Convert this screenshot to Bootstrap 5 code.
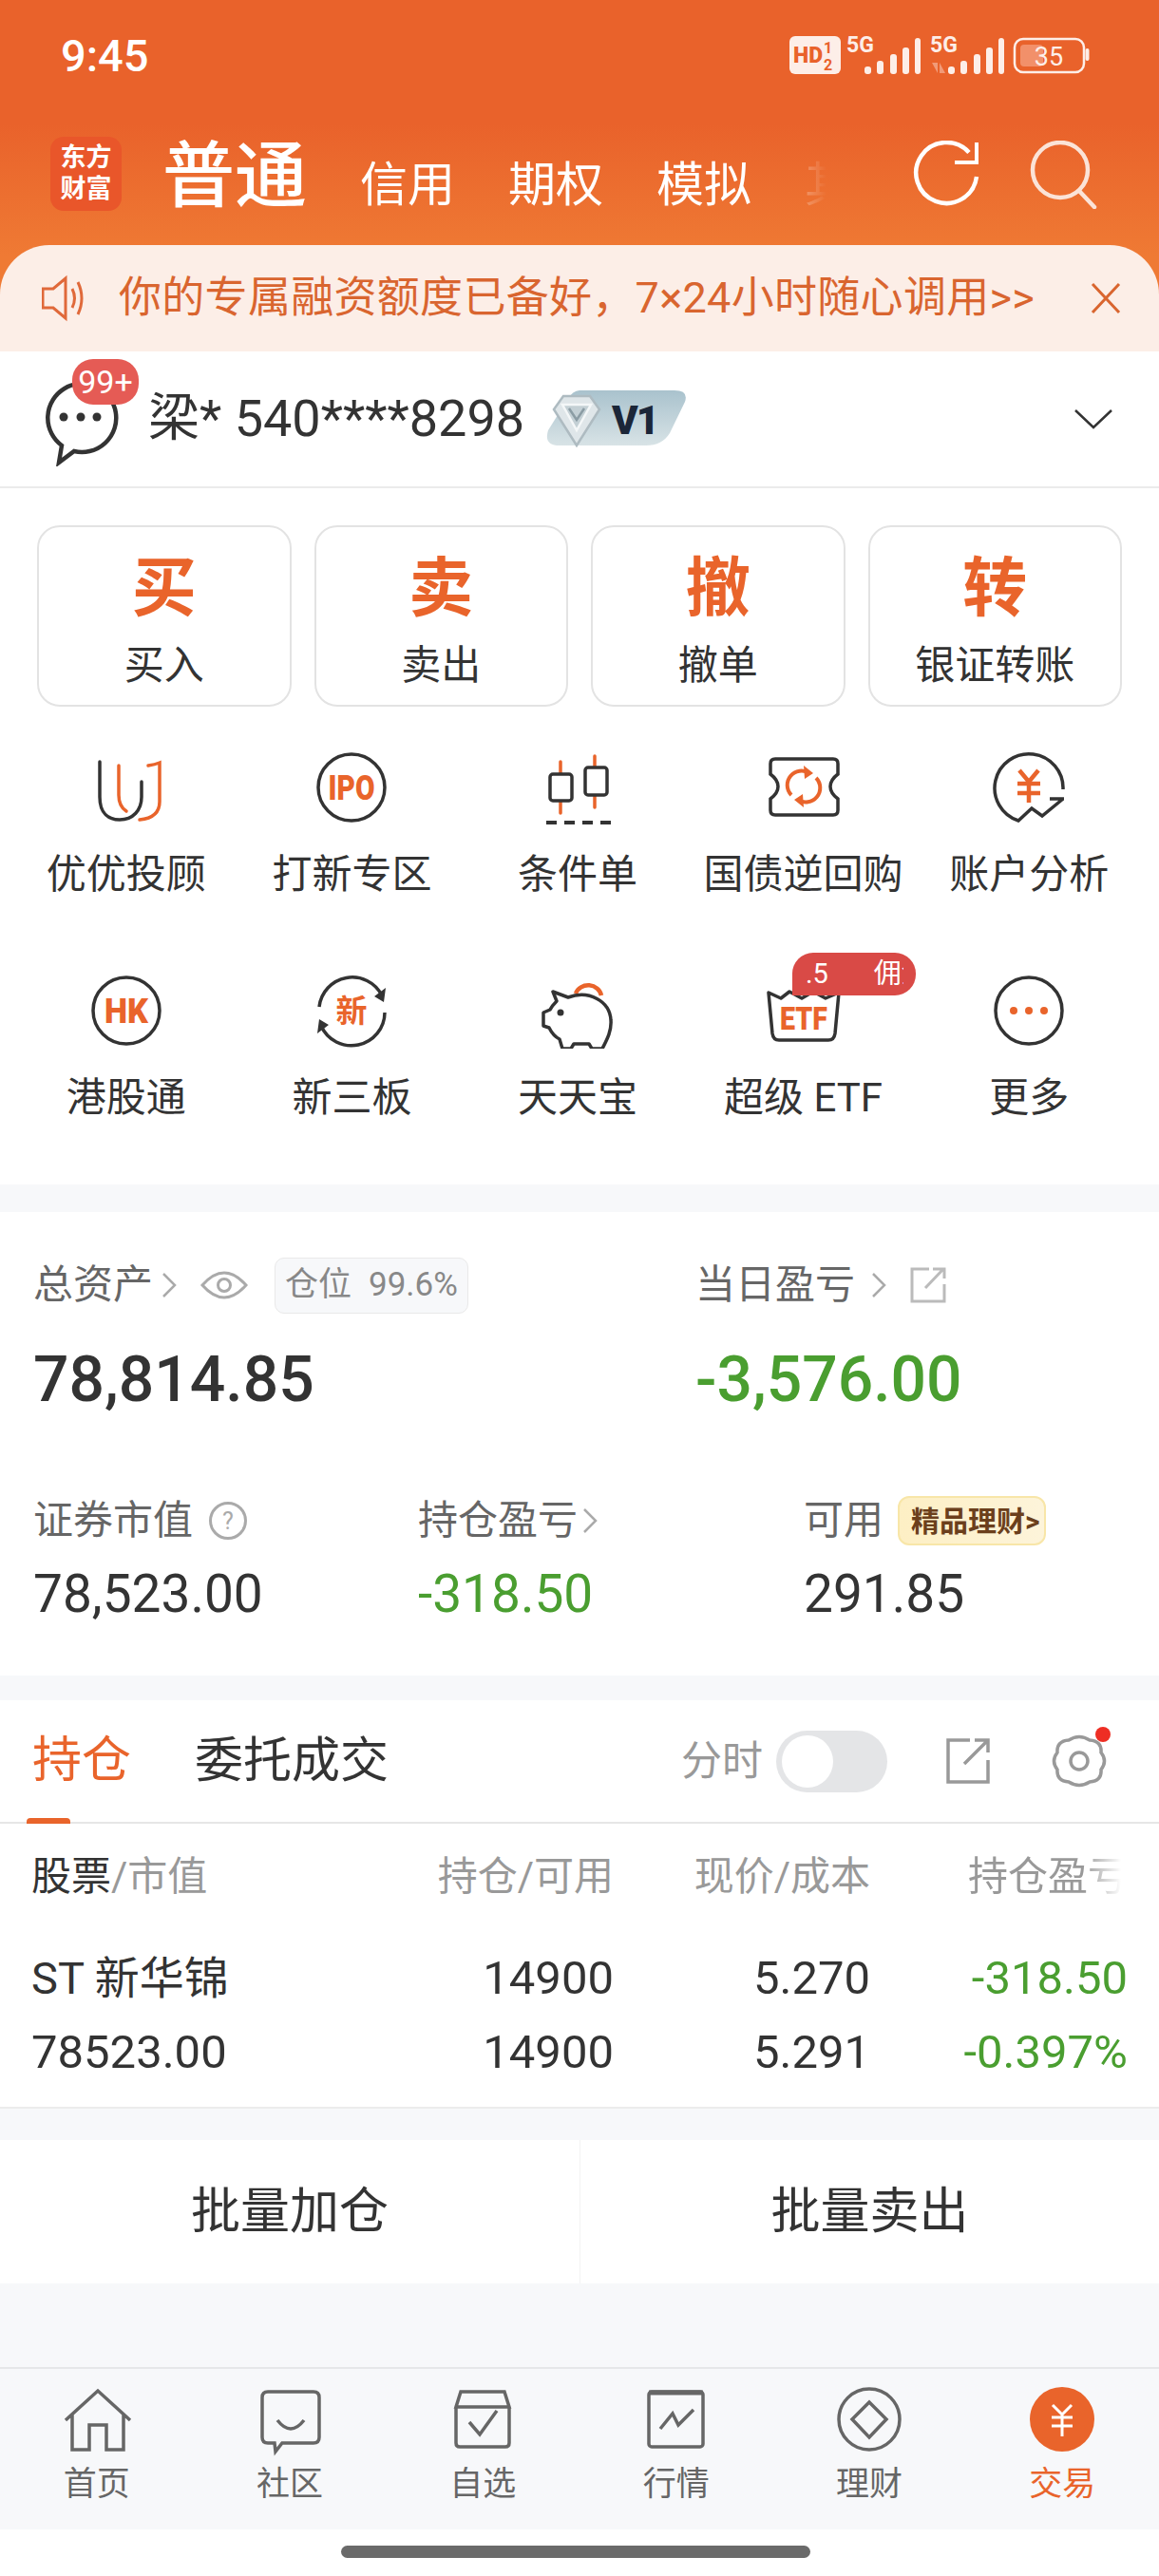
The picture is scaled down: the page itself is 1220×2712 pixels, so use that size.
<!DOCTYPE html>
<html lang="zh-CN">
<head>
  <meta charset="UTF-8">
  <meta name="viewport" content="width=device-width, initial-scale=1">
  <title>交易</title>
  <link href="https://cdn.jsdelivr.net/npm/bootstrap@5.3.3/dist/css/bootstrap.min.css" rel="stylesheet">
  <style>
    html, body {
      margin: 0;
      background: #f7f8fa;
      font-family: Roboto, "Noto Sans CJK SC", sans-serif;
      color: #333;
    }
    svg { display: block; flex: none; }
    .page { width: 1220px; height: 2712px; overflow: hidden; }
    .top-wrap { height: 370px; background: linear-gradient(#e9622b 0, #e9622b 130px, #ef7a34 270px); }
    .status-bar { height: 116px; padding: 0 73px 0 64px; }
    .clock { font-size: 47px; font-weight: 500; color: #fff; line-height: 1; }
    .top-head { height: 142px; padding: 28px 65px 0 53px; }
    .logo-box { width: 75px; height: 78px; background: #e9562a; border-radius: 14px; color: #fff; font-size: 27px; font-weight: 700; line-height: 33px; text-align: center; }
    .tab-main { font-size: 76px; font-weight: 500; color: #fff; line-height: 78px; margin-left: 43px; padding-top: 3px; }
    .tab-strip { width: 491px; height: 60px; margin: 21px 0 0 56px; gap: 56px; overflow: hidden; white-space: nowrap; font-size: 50px; line-height: 60px; color: #fff;
      -webkit-mask-image: linear-gradient(90deg, #000 412px, rgba(0,0,0,.25) 470px, transparent 491px); mask-image: linear-gradient(90deg, #000 412px, rgba(0,0,0,.25) 470px, transparent 491px); }
    .head-tools { gap: 50px; margin-left: auto; margin-top: 4px; }
    .promo { height: 112px; background: #fceee7; border-radius: 52px 52px 0 0; padding: 0 40px 0 44px; color: #d9652f; font-size: 45px; white-space: nowrap; }
    .promo-text { margin-left: 35px; letter-spacing: .3px; }
    .user-row { height: 144px; background: #fff; border-bottom: 2px solid #ebebeb; padding: 0 48px 0 40px; }
    .msg-count { top: -13px; left: 36px; width: 70px; height: 48px; background: #e55b55; border-radius: 22px; color: #fff; font-size: 34px; line-height: 48px; text-align: center; }
    .user-name { font-size: 54px; line-height: 60px; margin-left: 26px; margin-right: 23px; white-space: nowrap; }
    .trade-panel { height: 733px; background: #fff; padding-top: 39px; }
    .act-row { padding: 0 39px; }
    .act-btn { width: 267.5px; height: 191px; background: #fff; border: 2px solid #e3e3e3; border-radius: 24px; padding: 0; color: #333; }
    .act-btn b { display: block; font-size: 68px; line-height: 68px; color: #e9642b; font-weight: 700; margin-top: 15px; }
    .act-btn span { display: block; font-size: 42px; line-height: 50px; margin-top: 22px; }
    .quick-grid { padding: 45px 18px 0 14px; }
    .quick-item { height: 235px; }
    .quick-item span { display: block; font-size: 42px; line-height: 58px; margin-top: 23px; white-space: nowrap; }
    .etf-tag { top: -21px; left: 28px; width: 130px; height: 45px; background: #d94a46; border-radius: 22px 22px 22px 0; color: #fff; font-size: 29px; line-height: 45px; padding: 0 13px; }
    .etf-clip { overflow: hidden; white-space: nowrap; }
    .etf-clip i { font-style: normal; margin-left: -15px; display: block; }
    .etf-clip u { text-decoration: none; margin-left: 48px; }
    .asset-panel { height: 488px; margin-top: 29px; background: #fff; padding: 48px 0 0 35px; }
    .asset-head { height: 58px; }
    .asset-label { font-size: 42px; line-height: 58px; color: #666; white-space: nowrap; }
    .asset-big { font-size: 66px; font-weight: 500; line-height: 80px; margin-top: 31px; }
    .col-a { width: 697px; }
    .down-green { color: #4a9e30; }
    .ratio-pill { height: 59px; padding: 0 10px; margin-left: 28px; background: #f7f8fa; border: 1px solid #e9e9e9; border-radius: 10px; color: #888; font-size: 35px; gap: 18px; white-space: nowrap; }
    .asset-row2 { margin-top: 79px; }
    .col-s1 { width: 405px; }
    .col-s2 { width: 406px; }
    .asset-mid { font-size: 55px; line-height: 64px; margin-top: 16px; }
    .gold-tag { height: 52px; padding: 0 4px 0 12px; margin-left: 15px; background: linear-gradient(90deg, #fdefc4, #fdf4da); border: 2px solid #f8e6a8; border-radius: 12px; color: #6b3f1c; font-size: 30px; font-weight: 700; white-space: nowrap; }
    .hold-panel { height: 430px; margin-top: 26px; background: #fff; border-bottom: 2px solid #ececec; }
    .hold-tabs { height: 130px; border-bottom: 2px solid #e6e6e6; padding: 0 54px 0 34px; }
    .hold-on { font-size: 52px; color: #e9642b; }
    .hold-off { font-size: 51px; margin-left: 67px; }
    .hold-bar { left: 28px; bottom: -2px; width: 46px; height: 6px; background: #e9642b; border-radius: 4px 4px 0 0; }
    .time-label { font-size: 43px; color: #999; margin-right: 14px; }
    .fake-switch { width: 117px; height: 65px; background: #e4e5e7; border-radius: 33px; padding: 5px 6px; margin-right: 61px; }
    .fake-knob { width: 54px; height: 55px; background: #fff; border-radius: 50%; }
    .share-ico { margin-right: 63px; }
    .gear-dot { top: -6px; right: -3px; width: 16px; height: 16px; background: #ee2e24; border-radius: 50%; }
    .pos-grid { display: grid; grid-template-columns: 1fr 268px 270px 271px; padding: 0 33px 0 33px; text-align: right; white-space: nowrap; }
    .pos-grid > :first-child { text-align: left; }
    .pos-head { height: 124px; align-items: center; font-size: 42px; color: #999; padding-bottom: 14px; }
    .pos-head em { font-style: normal; color: #333; }
    .fade-end { -webkit-mask-image: linear-gradient(90deg, #000 72%, transparent 96%); mask-image: linear-gradient(90deg, #000 72%, transparent 96%); }
    .pos-row { height: 78px; align-items: center; font-size: 49px; }
    .stock-name { font-size: 47px; }
    .batch-row { height: 151px; margin-top: 33px; background: #fff; }
    .batch-row button { width: 50%; border: 0; background: transparent; font-size: 52px; color: #333; padding: 0; border-radius: 0; }
    .batch-row button + button { border-left: 1px solid #f3f3f3; }
    .tab-bar { height: 171px; margin-top: 88px; background: #f7f8fa; border-top: 2px solid #e6e7e9; padding-top: 16px; }
    .tab-bar span { display: block; font-size: 35px; line-height: 40px; margin-top: 10px; color: #666; }
    .tab-bar .now span { color: #e9642b; }
    .home-strip { height: 50px; background: #fff; padding: 17px 8px 0 0; }
    .home-pill { width: 494px; height: 13px; background: #6a6a6a; border-radius: 7px; }
  </style>
</head>
<body>
<div class="page">

  <div class="top-wrap">
    <div class="status-bar d-flex justify-content-between align-items-center">
      <div class="clock">9:45</div>
      <svg width="316" height="52" viewBox="0 -4 316 52">
        <rect x="0" y="2" width="54" height="40" rx="6" fill="#fdeee8"/>
        <text x="4" y="30" font-family="Roboto" font-weight="900" font-size="23" fill="#e9622b">HD</text>
        <text x="36" y="20" font-family="Roboto" font-weight="700" font-size="16" fill="#e9622b">1</text>
        <text x="36" y="38" font-family="Roboto" font-weight="700" font-size="16" fill="#e9622b">2</text>
        <text x="60" y="19" font-family="Roboto" font-weight="700" font-size="23" fill="#fdeee8">5G</text>
        <g fill="#fdeee8">
          <rect x="79" y="34" width="7" height="8" rx="3"/><rect x="92" y="28" width="7" height="14" rx="3"/><rect x="106" y="21" width="7" height="21" rx="3"/><rect x="119" y="14" width="7" height="28" rx="3"/><rect x="132" y="4" width="6" height="38" rx="3"/>
        </g>
        <text x="148" y="19" font-family="Roboto" font-weight="700" font-size="23" fill="#fdeee8">5G</text>
        <path d="M150 30h6v11zM158 41v-11l6 11z" fill="#f19a78"/>
        <g fill="#fdeee8">
          <rect x="167" y="34" width="7" height="8" rx="3"/><rect x="180" y="28" width="7" height="14" rx="3"/><rect x="194" y="21" width="7" height="21" rx="3"/><rect x="207" y="14" width="7" height="28" rx="3"/><rect x="220" y="4" width="6" height="38" rx="3"/>
        </g>
        <rect x="237" y="5" width="73" height="35" rx="9" fill="none" stroke="#fdeee8" stroke-width="2.5"/>
        <rect x="243" y="11" width="24" height="23" rx="4" fill="#f2906a"/>
        <text x="273" y="33" text-anchor="middle" font-family="Roboto" font-size="27" fill="#fdeee8">35</text>
        <rect x="311.500" y="15" width="4" height="13" rx="2" fill="#fdeee8"/>
      </svg>
    </div>

    <div class="top-head d-flex align-items-start">
      <div class="logo-box d-flex align-items-center justify-content-center">东方<br>财富</div>
      <div class="tab-main">普通</div>
      <div class="tab-strip d-flex"><div>信用</div><div>期权</div><div>模拟</div><div>其他</div></div>
      <div class="head-tools d-flex align-items-center">
        <svg width="72" height="72" viewBox="0 0 72 72" fill="none" stroke="#fff" stroke-width="4.500">
          <path d="M67 38A32 32 0 1 1 59 12.500"/><path d="M44 23H67V2" stroke-width="4"/>
        </svg>
        <svg width="72" height="72" viewBox="0 0 72 72" fill="none" stroke="#fbe3d7" stroke-width="4.500">
          <circle cx="33" cy="31" r="29"/><path d="M53 53L69 70" stroke-linecap="round"/>
        </svg>
      </div>
    </div>

    <div class="promo d-flex align-items-center">
      <svg width="46" height="50" viewBox="0 0 46 50" fill="none" stroke="#e0693a" stroke-width="3"><path d="M1 15H12L25 4V46L12 35H1Z"/><path d="M32 15Q37 25 32 35"/><path d="M38 8Q46 25 38 42"/></svg>
      <div class="promo-text">你的专属融资额度已备好，7×24小时随心调用&gt;&gt;</div>
      <svg class="ms-auto" width="32" height="34" viewBox="0 0 32 34" fill="none" stroke="#d9652f" stroke-width="3"><path d="M2 2L30 32M30 2L2 32"/></svg>
    </div>
  </div>

  <div class="user-row d-flex align-items-center">
    <div class="position-relative">
      <svg width="90" height="100" viewBox="0 0 90 100"><path d="M25 78L22 96L38 84A36 36 0 1 0 25 78Z" fill="none" stroke="#333" stroke-width="4.500"/><circle cx="27" cy="48" r="4.500" fill="#333"/><circle cx="45" cy="48" r="4.500" fill="#333"/><circle cx="62" cy="48" r="4.500" fill="#333"/></svg>
      <div class="msg-count position-absolute">99+</div>
    </div>
    <div class="user-name">梁* 540****8298</div>
    <svg width="150" height="60" viewBox="0 0 150 60">
      <defs><linearGradient id="vipBg" x1="0" y1="0" x2="0" y2="1"><stop offset="0" stop-color="#a9c2cd"/><stop offset="1" stop-color="#d8e3e6"/></linearGradient></defs>
      <path d="M35 0H135Q150 0 146 12L130 45Q122 58 105 58H14Q-3 58 2 42L22 10Q28 0 35 0Z" fill="url(#vipBg)"/>
      <path d="M18 6H46L56 20L32 58L8 20Z" fill="#dfe6e9" stroke="#aebbc1" stroke-width="2.500"/>
      <path d="M17 15H47L32 42Z" fill="#c4d0d5" stroke="#f4f7f8" stroke-width="2.500"/>
      <path d="M24 19L32 31L40 19" fill="none" stroke="#8b9ca4" stroke-width="2.500"/>
      <text x="69" y="46" font-family="Roboto" font-weight="900" font-size="42" letter-spacing="-2" fill="#1b2638">V1</text>
    </svg>
    <svg class="ms-auto" width="42" height="24" viewBox="0 0 42 24" fill="none" stroke="#333" stroke-width="2.500"><path d="M2 3L21 21L40 3"/></svg>
  </div>

  <div class="trade-panel">
    <div class="act-row d-flex gap-4">
      <button class="btn act-btn"><b>买</b><span>买入</span></button>
      <button class="btn act-btn"><b>卖</b><span>卖出</span></button>
      <button class="btn act-btn"><b>撤</b><span>撤单</span></button>
      <button class="btn act-btn"><b>转</b><span>银证转账</span></button>
    </div>

    <div class="quick-grid row row-cols-5 g-0">
      <div class="col quick-item d-flex flex-column align-items-center">
        <svg width="80" height="80" viewBox="0 0 80 80" fill="none" stroke-width="3.500" stroke-linecap="round">
          <path d="M12 13V50C12 68 22 74 33 74C47 74 56 64 56 50V34" stroke="#333"/>
          <path d="M32 17V48Q32 60 40 65" stroke="#e9642b"/><path d="M63 17Q70 16 75 14V55Q75 72 54 74" stroke="#e9642b"/>
        </svg>
        <span>优优投顾</span>
      </div>
      <div class="col quick-item d-flex flex-column align-items-center">
        <svg width="80" height="80" viewBox="0 0 80 80"><circle cx="40" cy="40" r="35" fill="none" stroke="#333" stroke-width="3.500"/><text x="40" y="53" text-anchor="middle" font-family="Roboto" font-weight="900" font-size="37" textLength="49" lengthAdjust="spacingAndGlyphs" fill="#e9642b">IPO</text></svg>
        <span>打新专区</span>
      </div>
      <div class="col quick-item d-flex flex-column align-items-center">
        <svg width="80" height="80" viewBox="0 0 80 80" fill="none" stroke-width="3.500">
          <path d="M22 13V67M58 7V61" stroke="#e9642b" stroke-linecap="round"/>
          <rect x="11" y="26" width="23" height="28" rx="3" fill="#fff" stroke="#333"/><rect x="48" y="19" width="23" height="29" rx="3" fill="#fff" stroke="#333"/>
          <path d="M7 77H75" stroke="#333" stroke-width="4" stroke-dasharray="11 8"/>
        </svg>
        <span>条件单</span>
      </div>
      <div class="col quick-item d-flex flex-column align-items-center">
        <svg width="80" height="80" viewBox="0 0 80 80" fill="none" stroke-width="3.500">
          <path d="M10 10H71Q76 10 76 15V26Q68 32 68 39Q68 46 76 52V64Q76 69 71 69H10Q5 69 5 64V52Q13 46 13 39Q13 32 5 26V15Q5 10 10 10Z" stroke="#333"/>
          <path d="M27 48A15 15 0 0 1 46 25M53 30A15 15 0 0 1 34 53" stroke="#e9642b" stroke-width="4"/>
          <path d="M40 17L50 25L41 31ZM40 61L30 53L39 47Z" fill="#e9642b"/>
        </svg>
        <span>国债逆回购</span>
      </div>
      <div class="col quick-item d-flex flex-column align-items-center">
        <svg width="80" height="80" viewBox="0 0 80 80" fill="none" stroke-width="3.500">
          <path d="M76 42A36 36 0 1 0 29 75L43 62L54 70L76 52M62 52H77" stroke="#333"/>
          <path d="M30 22L40 34L50 22M28 36H52M28 46H52M40 34V56" stroke="#e9642b" stroke-width="4.500"/>
        </svg>
        <span>账户分析</span>
      </div>

      <div class="col quick-item d-flex flex-column align-items-center">
        <svg width="80" height="80" viewBox="0 0 80 80"><circle cx="40" cy="40" r="35" fill="none" stroke="#333" stroke-width="3.500"/><text x="40" y="53" text-anchor="middle" font-family="Roboto" font-weight="900" font-size="37" textLength="46" lengthAdjust="spacingAndGlyphs" fill="#e9642b">HK</text></svg>
        <span>港股通</span>
      </div>
      <div class="col quick-item d-flex flex-column align-items-center">
        <svg width="80" height="80" viewBox="0 0 80 80" fill="none">
          <path d="M6 36A35 35 0 0 1 72 24M75 42A35 35 0 0 1 8 56" stroke="#333" stroke-width="3.500"/>
          <path d="M76 16L74 31L64 25ZM4 64L6 49L16 55Z" fill="#333"/>
          <text x="40" y="52" text-anchor="middle" font-family="Noto Sans CJK SC" font-weight="700" font-size="33" fill="#e9642b">新</text>
        </svg>
        <span>新三板</span>
      </div>
      <div class="col quick-item d-flex flex-column align-items-center">
        <svg width="80" height="80" viewBox="0 0 80 80" fill="none" stroke-width="3.500">
          <path d="M38 22A14 13 0 0 1 65 24" stroke="#e9642b" stroke-width="4.500"/>
          <path d="M14 20L30 26C52 18 74 30 75 50C76 62 70 72 66 80H55L52 75H36L33 80H24L21 70C15 67 12 62 10 58L4 56V42L11 39C13 35 16 32 18 30Z" stroke="#333" stroke-linejoin="round" fill="#fff"/>
          <circle cx="22" cy="42" r="3.500" fill="#333"/>
        </svg>
        <span>天天宝</span>
      </div>
      <div class="col quick-item d-flex flex-column align-items-center">
        <div class="position-relative">
          <svg width="80" height="80" viewBox="0 0 80 80" fill="none">
            <path d="M3 21L7 64Q8 71 14 71H66Q72 71 73 64L77 21L63 27L50 20L38 27L25 20L16 27Z" stroke="#333" stroke-width="3.500" stroke-linejoin="round"/>
            <text x="40" y="60" text-anchor="middle" font-family="Roboto" font-weight="900" font-size="33" textLength="50" lengthAdjust="spacingAndGlyphs" fill="#e9642b">ETF</text>
          </svg>
          <div class="etf-tag position-absolute"><div class="etf-clip"><i>0.5<u>佣金</u></i></div></div>
        </div>
        <span>超级 ETF</span>
      </div>
      <div class="col quick-item d-flex flex-column align-items-center">
        <svg width="80" height="80" viewBox="0 0 80 80"><circle cx="40" cy="40" r="35" fill="none" stroke="#333" stroke-width="3.500"/><circle cx="24" cy="40" r="4" fill="#e9642b"/><circle cx="40" cy="40" r="4" fill="#e9642b"/><circle cx="56" cy="40" r="4" fill="#e9642b"/></svg>
        <span>更多</span>
      </div>
    </div>
  </div>

  <div class="asset-panel">
    <div class="d-flex">
      <div class="col-a">
        <div class="asset-head d-flex align-items-center">
          <div class="asset-label">总资产</div>
          <svg class="ms-2" width="18" height="30" viewBox="0 0 18 30" fill="none" stroke="#aaa" stroke-width="2.500"><path d="M3 3L15 15L3 27"/></svg>
          <svg class="ms-4" width="50" height="36" viewBox="0 0 50 36" fill="none" stroke="#aaa" stroke-width="3"><path d="M2 18Q25 -8 48 18Q25 44 2 18Z"/><circle cx="25" cy="18" r="6.500"/></svg>
          <div class="ratio-pill d-flex align-items-center"><div>仓位</div><div>99.6%</div></div>
        </div>
        <div class="asset-big">78,814.85</div>
      </div>
      <div>
        <div class="asset-head d-flex align-items-center">
          <div class="asset-label">当日盈亏</div>
          <svg class="ms-3" width="18" height="30" viewBox="0 0 18 30" fill="none" stroke="#aaa" stroke-width="2.500"><path d="M3 3L15 15L3 27"/></svg>
          <svg class="ms-4" width="38" height="38" viewBox="0 0 38 38" fill="none" stroke="#bbb" stroke-width="3"><path d="M20 2H2V36H36V18"/><path d="M16 22L35 2M24 2H36V12"/></svg>
        </div>
        <div class="asset-big down-green">-3,576.00</div>
      </div>
    </div>
    <div class="asset-row2 d-flex">
      <div class="col-s1">
        <div class="asset-head d-flex align-items-center">
          <div class="asset-label">证券市值</div>
          <svg class="ms-3" width="42" height="42" viewBox="0 0 42 42" fill="none"><circle cx="21" cy="21" r="18.500" stroke="#aaa" stroke-width="3"/><text x="21" y="30" text-anchor="middle" font-family="Roboto" font-size="25" fill="#aaa">?</text></svg>
        </div>
        <div class="asset-mid">78,523.00</div>
      </div>
      <div class="col-s2">
        <div class="asset-head d-flex align-items-center">
          <div class="asset-label">持仓盈亏</div>
          <svg class="ms-1" width="18" height="30" viewBox="0 0 18 30" fill="none" stroke="#aaa" stroke-width="2.500"><path d="M3 3L15 15L3 27"/></svg>
        </div>
        <div class="asset-mid down-green">-318.50</div>
      </div>
      <div>
        <div class="asset-head d-flex align-items-center">
          <div class="asset-label">可用</div>
          <div class="gold-tag d-flex align-items-center">精品理财&gt;</div>
        </div>
        <div class="asset-mid">291.85</div>
      </div>
    </div>
  </div>

  <div class="hold-panel">
    <div class="hold-tabs d-flex align-items-center position-relative">
      <div class="hold-on">持仓</div>
      <div class="hold-off">委托成交</div>
      <div class="hold-bar position-absolute"></div>
      <div class="time-label ms-auto">分时</div>
      <div class="fake-switch"><div class="fake-knob"></div></div>
      <svg class="share-ico" width="48" height="50" viewBox="0 0 48 50" fill="none" stroke="#999" stroke-width="3.500"><path d="M26 3H3V47H45V24"/><path d="M20 28L45 3M31 3H45V16"/></svg>
      <div class="position-relative">
        <svg width="60" height="60" viewBox="0 0 60 60" fill="none" stroke="#999" stroke-width="3.500"><path d="M19 8Q30 1 41 8Q54 9 53 21Q60 30 53 39Q54 51 41 52Q30 59 19 52Q6 51 7 39Q0 30 7 21Q6 9 19 8Z"/><circle cx="30" cy="30" r="9"/></svg>
        <div class="gear-dot position-absolute"></div>
      </div>
    </div>
    <div class="pos-grid pos-head">
      <div><em>股票</em>/市值</div><div>持仓/可用</div><div>现价/成本</div><div class="fade-end ms-auto">持仓盈亏</div>
    </div>
    <div class="pos-grid pos-row">
      <div class="stock-name">ST 新华锦</div><div>14900</div><div>5.270</div><div class="down-green">-318.50</div>
    </div>
    <div class="pos-grid pos-row">
      <div>78523.00</div><div>14900</div><div>5.291</div><div class="down-green">-0.397%</div>
    </div>
  </div>

  <div class="batch-row d-flex">
    <button class="btn">批量加仓</button>
    <button class="btn">批量卖出</button>
  </div>

  <div class="tab-bar row row-cols-6 g-0 text-center">
    <div class="col d-flex flex-column align-items-center">
      <svg width="80" height="76" viewBox="0 0 80 76" fill="none" stroke="#666" stroke-width="3.500"><path d="M7 38L41 7L75 38M14 31V69H32V43H50V69H68V31"/></svg>
      <span>首页</span>
    </div>
    <div class="col d-flex flex-column align-items-center">
      <svg width="80" height="76" viewBox="0 0 80 76" fill="none" stroke="#666" stroke-width="3.500"><path d="M11 14Q11 8 17 8H65Q71 8 71 14V56Q71 62 65 62H32L25 71L24 62H17Q11 62 11 56Z"/><path d="M27 38Q41 56 55 38"/></svg>
      <span>社区</span>
    </div>
    <div class="col d-flex flex-column align-items-center">
      <svg width="80" height="76" viewBox="0 0 80 76" fill="none" stroke="#666" stroke-width="3.500"><path d="M12 24L17 8H63L68 24ZM12 24V62Q12 66 16 66H64Q68 66 68 62V24"/><path d="M26 40L37 53L55 28"/></svg>
      <span>自选</span>
    </div>
    <div class="col d-flex flex-column align-items-center">
      <svg width="80" height="76" viewBox="0 0 80 76" fill="none" stroke="#666" stroke-width="3.500"><rect x="11" y="8" width="57" height="58" rx="3"/><path d="M11 9H68" stroke-width="5"/><path d="M23 47L36 31L42 43L58 27"/></svg>
      <span>行情</span>
    </div>
    <div class="col d-flex flex-column align-items-center">
      <svg width="80" height="76" viewBox="0 0 80 76" fill="none" stroke="#666" stroke-width="3.500"><circle cx="40" cy="37" r="32"/><path d="M40 19L58 37L40 56L22 37Z"/></svg>
      <span>理财</span>
    </div>
    <div class="col d-flex flex-column align-items-center now">
      <svg width="80" height="76" viewBox="0 0 80 76" fill="none"><circle cx="40" cy="37" r="34" fill="#e9642b"/><path d="M30 22L40 32L50 22M29 35H51M29 44H51M40 32V55" stroke="#fff" stroke-width="3"/></svg>
      <span>交易</span>
    </div>
  </div>

  <div class="home-strip d-flex justify-content-center">
    <div class="home-pill"></div>
  </div>
</div>

<script src="https://cdn.jsdelivr.net/npm/bootstrap@5.3.3/dist/js/bootstrap.bundle.min.js"></script>
</body>
</html>
